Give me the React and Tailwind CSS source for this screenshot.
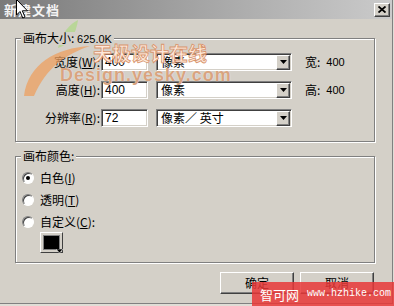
import React from 'react';

const CJK = '"Noto Sans CJK SC", "Liberation Sans", sans-serif';

const sunken =
  'border border-t-[#808080] border-l-[#808080] border-r-white border-b-white shadow-[inset_1px_1px_0_#404040,inset_-1px_-1px_0_#d4d0c8]';
const raised =
  'border border-t-white border-l-white border-r-[#404040] border-b-[#404040] shadow-[inset_-1px_-1px_0_#808080]';

function U({ children }) {
  return <span className="underline underline-offset-[1px]">{children}</span>;
}

function Arrow() {
  return (
    <div className={`w-[14px] h-[15px] bg-[#d4d0c8] flex items-center justify-center ${raised}`}>
      <svg width="7" height="4" viewBox="0 0 7 4">
        <path d="M0 0h7L3.5 4z" fill="#000" />
      </svg>
    </div>
  );
}

function SizeRow({ label, value, unit, extra }) {
  return (
    <div className="flex items-center h-[18px]">
      <div className="w-[85px] pr-[1px] text-right whitespace-nowrap">{label}</div>
      <div className={`w-[47px] h-[18px] bg-white flex items-center pl-[3px] ${sunken}`}>
        <span className="font-['Liberation_Sans'] text-[12px]">{value}</span>
      </div>
      <div className={`ml-[8px] w-[136px] h-[18px] bg-white flex items-center justify-between pl-[4px] pr-[1px] ${sunken}`}>
        <span className="whitespace-nowrap">{unit}</span>
        <Arrow />
      </div>
      {extra && <div className="ml-[13px] flex items-center gap-[6px]">{extra}</div>}
    </div>
  );
}

function Radio({ checked, children }) {
  return (
    <div className="flex items-center h-[22px] pl-[6px]">
      <div className="w-[12px] h-[12px] rounded-full bg-white border border-t-[#808080] border-l-[#808080] border-r-white border-b-white flex items-center justify-center shadow-[inset_1px_1px_0_#404040]">
        {checked && <div className="w-[4px] h-[4px] rounded-full bg-black" />}
      </div>
      <span className="ml-[6px]">{children}</span>
    </div>
  );
}

function Button({ children }) {
  return (
    <button className={`w-[74px] h-[22px] bg-[#d4d0c8] flex items-center justify-center ${raised}`}>
      {children}
    </button>
  );
}

export default function App() {
  return (
    <div
      className="relative w-[394px] h-[306px] overflow-hidden bg-[#e0ddd6] text-[12px] text-black"
      style={{ fontFamily: CJK }}
    >
      <div className="w-[393px] h-[304px] bg-[#d4d0c8] border-r border-b border-[#808080] flex flex-col">
        <div className="h-[19px] shrink-0 bg-gradient-to-r from-[#7a7a7a] via-[#a4a4a4] to-[#cbcbcb] flex items-center justify-between pl-[4px] pr-[2px]">
          <span className="text-[#f4f4f4] font-bold text-[13px] leading-none tracking-[1px]">新建文档</span>
          <div className={`w-[16px] h-[14px] bg-[#d4d0c8] flex items-center justify-center ${raised}`}>
            <svg width="8" height="7" viewBox="0 0 8 7">
              <path d="M0.5 0.5l7 6M7.5 0.5l-7 6" stroke="#000" strokeWidth="1.8" />
            </svg>
          </div>
        </div>

        <div className="pl-[15px] pr-[17px]">
          <fieldset className="mt-[13px] border border-[#808080] shadow-[inset_1px_1px_0_#fff,1px_1px_0_#fff] pb-[14px]">
            <legend className="ml-[5px] px-[2px] leading-[12px] bg-[#d4d0c8] relative z-10">
              画布大小: <span className="font-['Liberation_Sans'] text-[11px]">625.0K</span>
            </legend>
            <div className="mt-[8px] flex flex-col gap-[10px]">
              <SizeRow
                label={<>宽度(<U>W</U>):</>}
                value="400"
                unit="像素"
                extra={<><span>宽:</span><span className="font-['Liberation_Sans'] text-[11px]">400</span></>}
              />
              <SizeRow
                label={<>高度(<U>H</U>):</>}
                value="400"
                unit="像素"
                extra={<><span>高:</span><span className="font-['Liberation_Sans'] text-[11px]">400</span></>}
              />
              <SizeRow label={<>分辨率(<U>R</U>):</>} value="72" unit="像素／ 英寸" />
            </div>
          </fieldset>

          <fieldset className="mt-[8px] border border-[#808080] shadow-[inset_1px_1px_0_#fff,1px_1px_0_#fff] pb-[9px]">
            <legend className="ml-[5px] px-[2px] leading-[12px] bg-[#d4d0c8]">画布颜色:</legend>
            <div className="mt-[5px] flex flex-col">
              <Radio checked>白色(<U>I</U>)</Radio>
              <Radio>透明(<U>T</U>)</Radio>
              <Radio>自定义(<U>C</U>):</Radio>
              <div className="ml-[24px] -mt-[1px] relative w-[23px] h-[21px] border border-t-white border-l-white border-r-[#404040] border-b-[#404040] bg-[#d4d0c8] p-[2px]">
                <div className="w-full h-full bg-black border border-[#808080]" />
                <svg className="absolute right-[-1px] bottom-[-2px]" width="7" height="5" viewBox="0 0 7 5">
                  <path d="M0 0h7L3.5 4z" fill="#000" stroke="#fff" strokeWidth="0.5" />
                </svg>
              </div>
            </div>
          </fieldset>

          <div className="mt-[9px] flex justify-end gap-[6px] pr-[1px]">
            <Button>确定</Button>
            <Button>取消</Button>
          </div>
        </div>
      </div>

      {/* watermark logo */}
      <svg className="absolute left-[18px] top-[18px] opacity-75" width="80" height="80" viewBox="0 0 80 80">
        <path d="M40 30 C44 14 52 6 60 2 C58 16 52 26 40 30z" fill="#b0d888" />
        <path d="M6 78 C10 46 38 30 72 28 C48 36 28 50 16 78z" fill="#eea060" />
      </svg>
      <div className="absolute left-[93px] top-[39px] text-[19px] font-bold text-[#fde8da] whitespace-nowrap [-webkit-text-stroke:0.8px_#d8946c]">
        天极设计在线
      </div>
      <div className="absolute left-[60px] top-[62px] font-['Liberation_Sans'] text-[18px] font-bold text-[#d8a480] tracking-[1px] whitespace-nowrap [text-shadow:0_0_1px_#fff]">
        Design.yesky.com
      </div>

      {/* mouse cursor */}
      <svg className="absolute left-[16px] top-[-1px]" width="13" height="20" viewBox="0 0 13 20">
        <path d="M0.5 0.5 V16 L4 12.5 L6.8 19 L9 18 L6.3 11.8 H11.5 Z" fill="#fff" stroke="#000" strokeWidth="1" />
      </svg>

      {/* site watermark */}
      <div className="absolute right-0 bottom-0 w-[142px] h-[24px] bg-[#e83838]/85 flex items-center pl-[8px] gap-[8px] whitespace-nowrap">
        <span className="text-white text-[13px] leading-none">智可网</span>
        <span className="text-white font-['Liberation_Mono'] text-[10px] leading-none">www.hzhike.com</span>
      </div>
    </div>
  );
}
